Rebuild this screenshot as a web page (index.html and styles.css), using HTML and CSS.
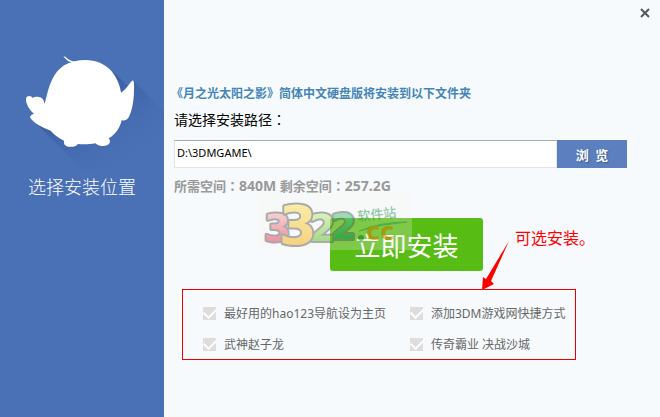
FILE: index.html
```html
<!DOCTYPE html>
<html lang="zh-CN">
<head>
    <meta charset="UTF-8">
    <meta name="viewport" content="width=device-width, initial-scale=1.0">
    <title>选择安装位置</title>
    <link rel="stylesheet" href="styles.css">
</head>
<body>

    <aside class="sidebar">
        <svg class="bird" viewBox="0 0 492 390" aria-hidden="true">
            <defs>
                <linearGradient id="shade" gradientUnits="userSpaceOnUse" x1="230" y1="200" x2="370" y2="410">
                    <stop offset="0" stop-color="#395d9e" stop-opacity="0.8"/>
                    <stop offset="1" stop-color="#4a70b6" stop-opacity="0"/>
                </linearGradient>
            </defs>
            <path fill="url(#shade)" d="M98 240 L248 390 L492 390 L492 214 L400 122 L385 140 L340 95 Z"/>
            <path fill="#fff" d="M190 48 C200 50 206 64 224 64 C264 54 308 62 336 95 C353 117 361 140 363 158 C376 150 385 135 396 122 C402 118 403 130 402 150 C402 190 392 225 384 235 C378 242 370 243 365 240 C361 262 345 285 326 295 C334 305 330 316 312 318 C300 319 290 314 286 310 C270 313 250 314 233 312 C230 322 200 324 194 314 C191 308 192 304 192 302 C175 294 160 282 152 272 C130 264 100 250 90 232 C90 226 98 223 102 221 C88 210 77 190 78 176 C80 165 95 167 98 174 C105 168 125 168 130 180 L134 192 C140 170 145 140 160 112 C173 88 193 72 215 67 C205 65 195 56 190 48 Z"/>
        </svg>
        <h1>选择安装位置</h1>
    </aside>

    <main class="content">
        <button class="close-btn" type="button" aria-label="关闭">
            <svg viewBox="0 0 10 10" aria-hidden="true"><path d="M1 1 L9 9 M9 1 L1 9"/></svg>
        </button>

        <p class="product">《月之光太阳之影》简体中文硬盘版将安装到以下文件夹</p>

        <div class="form">
            <label class="path-label" for="path">请选择安装路径<span class="colon" lang="zh-TW">：</span></label>
            <div class="path-row">
                <input class="path-input" id="path" type="text" value="D:\3DMGAME\">
                <button class="browse-btn" type="button">浏&ensp;览</button>
            </div>
            <p class="space">所需空间<span class="colon" lang="zh-TW">：</span><b>840M</b> 剩余空间<span class="colon" lang="zh-TW">：</span><b>257.2G</b></p>

            <div class="install-row">
                <button class="install-btn" type="button">立即安装</button>
                <span class="note">可选安装。</span>

                <svg class="arrow" viewBox="0 0 30 52" aria-hidden="true">
                    <path d="M28 2 L10 42 L13 45 L1 51 L2 38 L5 40 Z"/>
                </svg>

                <!-- Водяной знак поверх кнопки -->
                <svg class="watermark" viewBox="0 0 154 56" aria-hidden="true">
                    <defs>
                        <linearGradient id="red" x1="0" y1="0" x2="0" y2="1">
                            <stop offset="0.2" stop-color="#f6b0b0"/>
                            <stop offset="1" stop-color="#e2304e"/>
                        </linearGradient>
                        <linearGradient id="yellow" x1="0" y1="0" x2="0" y2="1">
                            <stop offset="0.2" stop-color="#fbe36a"/>
                            <stop offset="1" stop-color="#f8a91c"/>
                        </linearGradient>
                        <linearGradient id="green" x1="0" y1="0" x2="0" y2="1">
                            <stop offset="0.2" stop-color="#c6ec8a"/>
                            <stop offset="1" stop-color="#55b822"/>
                        </linearGradient>
                        <linearGradient id="teal" x1="0" y1="0" x2="0" y2="1">
                            <stop offset="0.2" stop-color="#5fce8e"/>
                            <stop offset="1" stop-color="#0c8a58"/>
                        </linearGradient>
                    </defs>
                    <rect class="mark-bg" width="154" height="56"/>
                    <g class="digits">
                        <text x="6" y="47" font-size="38" fill="url(#red)">3</text>
                        <text x="51" y="47" font-size="38" fill="url(#green)">2</text>
                        <text x="73" y="45" font-size="36" fill="url(#teal)">2</text>
                        <text x="21" y="50" font-size="54" fill="url(#yellow)">3</text>
                    </g>
                    <text class="mark-site" x="100" y="27" transform="rotate(-6 100 27)">软件站</text>
                    <path class="swash" d="M101 37 Q122 28 149 28 Q124 30 101 37 Z"/>
                    <circle class="mark-dot" cx="103" cy="44" r="3"/>
                    <text class="mark-cc" x="108" y="46">cc</text>
                </svg>
            </div>

            <div class="options">
                <label><input type="checkbox" checked>最好用的hao123导航设为主页</label>
                <label><input type="checkbox" checked>添加3DM游戏网快捷方式</label>
                <label><input type="checkbox" checked>武神赵子龙</label>
                <label><input type="checkbox" checked>传奇霸业 决战沙城</label>
            </div>
        </div>
    </main>

</body>
</html>
```

FILE: styles.css
```css
* {
    box-sizing: border-box;
}

body {
    display: flex;
    min-height: 100vh;
    margin: 0;
    font-family: "Noto Sans", "Noto Sans CJK SC", sans-serif;
    font-size: 12px;
    background-color: #f6fafc;
    color: #666;
}

button {
    padding: 0;
    border: none;
    font-family: inherit;
    cursor: pointer;
}

h1, p {
    margin: 0;
}

/* Левая панель */
.sidebar {
    flex: 0 0 164px;
    padding-top: 40px;
    background-color: #4a70b6;
    color: #fff;
    text-align: center;
}

.bird {
    display: block;
    width: 100%;
}

.sidebar h1 {
    font-family: "Noto Sans CJK SC", sans-serif;
    font-size: 18px;
    font-weight: 300;
    line-height: 32px;
}

/* Правая часть */
.content {
    position: relative;
    flex: 1;
    padding: 84px 33px 56px 7px;
}

.form {
    padding-left: 3px;
}

.close-btn {
    position: absolute;
    top: 8px;
    right: 10px;
    width: 10px;
    height: 10px;
    background: none;
}

.close-btn svg {
    display: block;
    fill: none;
    stroke: #555;
    stroke-width: 2;
}

.product {
    font-weight: bold;
    line-height: 20px;
    color: #4585b5;
}

/* Двоеточие по центру знака */
.colon {
    font-family: "Noto Sans CJK TC", sans-serif;
    line-height: 1;
}

.path-label {
    display: block;
    margin-bottom: 4px;
    font-size: 14px;
    line-height: 32px;
    color: #000;
}

.path-row {
    display: flex;
    height: 28px;
}

.path-input {
    flex: 1;
    min-width: 0;
    padding: 0 2px 4px;
    border: 1px solid #dfe5e8;
    border-top-color: #a5aaac;
    font-family: inherit;
    font-size: 11px;
    background-color: #fff;
    color: #000;
}

.browse-btn {
    width: 70px;
    font-size: 13px;
    font-weight: bold;
    background-color: #5c7fbf;
    color: #fff;
    text-shadow: 1px 1px 1px #3d5c96;
}

.space {
    margin: 8px 0 22px;
    font-size: 13px;
    font-weight: bold;
    line-height: 20px;
    color: #999;
}

.space b {
    font-size: 14px;
    font-weight: bold;
    line-height: 1;
}

.install-row {
    position: relative;
    display: flex;
    padding-left: 156px;
    margin-bottom: 18px;
}

.install-btn {
    width: 153px;
    height: 53px;
    border-radius: 3px;
    font-size: 26px;
    background-color: #57bd14;
    color: #fff;
}

.note {
    margin-left: 32px;
    font-size: 16px;
    line-height: 40px;
    color: #f00;
}

.arrow {
    position: absolute;
    top: 21px;
    left: 307px;
    width: 30px;
    height: 52px;
    fill: #f00;
}

.watermark {
    position: absolute;
    top: -24px;
    left: 84px;
    width: 154px;
    height: 56px;
    overflow: visible;
    opacity: 0.6;
    pointer-events: none;
}

.mark-bg {
    fill: #fbf8ee;
    opacity: 0.4;
}

.digits {
    font-family: "DejaVu Sans", sans-serif;
    font-weight: bold;
    stroke: #777;
    stroke-width: 4;
    stroke-linejoin: round;
    paint-order: stroke;
}

.mark-site {
    font-size: 13px;
    font-weight: 500;
    fill: #4fa36b;
}

.swash {
    fill: #4fa36b;
    stroke: #4fa36b;
}

.mark-dot {
    fill: #2f8a2f;
}

.mark-cc {
    font-family: "DejaVu Sans", sans-serif;
    font-size: 24px;
    font-weight: bold;
    fill: #d08a10;
}

/* Дополнительные программы */
.options {
    display: grid;
    grid-template-columns: 207px 1fr;
    row-gap: 11px;
    margin: 0 51px 0 8px;
    padding: 13px 0 5px 20px;
    border: 1px solid #e00;
}

.options label {
    display: flex;
    align-items: center;
    height: 20px;
    white-space: nowrap;
}

.options input {
    display: grid;
    place-items: center;
    width: 13px;
    height: 13px;
    margin: 0 8px 0 0;
    appearance: none;
    background-color: #ddd;
}

.options input:checked::after {
    content: "";
    width: 10px;
    height: 6px;
    margin-bottom: 3px;
    border-left: 2px solid #fff;
    border-bottom: 2px solid #fff;
    transform: rotate(-45deg);
}
```
